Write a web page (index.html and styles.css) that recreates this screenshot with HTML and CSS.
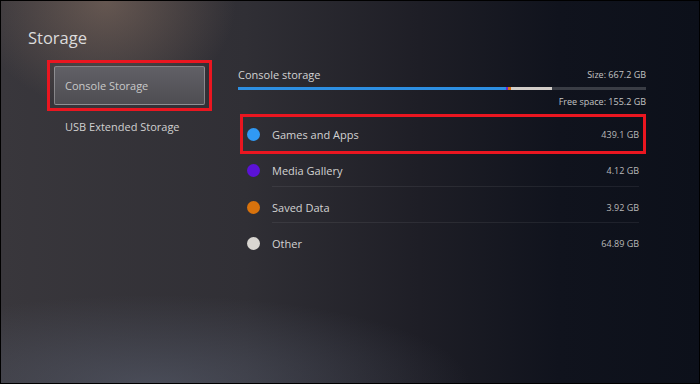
FILE: index.html
```html
<!DOCTYPE html>
<html lang="en">
<head>
    <meta charset="UTF-8">
    <title>Storage</title>
    <link rel="stylesheet" href="styles.css">
</head>
<body>
    <div class="screen">
        <h1 class="title">Storage</h1>

        <div class="content">
            <nav class="side-nav">
                <div class="nav-item active">
                    <div class="nav-btn">Console Storage</div>
                </div>
                <div class="nav-item">
                    <div class="nav-btn">USB Extended Storage</div>
                </div>
            </nav>

            <section class="panel">
                <div class="panel-head">
                    <span class="panel-title">Console storage</span>
                    <span class="panel-size">Size: 667.2 GB</span>
                </div>
                <div class="usage-bar">
                    <div class="seg seg-games" style="width: 65.6%"></div>
                    <div class="seg seg-media" style="width: 0.6%"></div>
                    <div class="seg seg-saved" style="width: 0.6%"></div>
                    <div class="seg seg-other" style="width: 10.1%"></div>
                </div>
                <div class="free-space">Free space: 155.2 GB</div>

                <ul class="usage-list">
                    <li class="usage-row active">
                        <span class="dot dot-games"></span>
                        <div class="row-main">
                            <span class="row-label">Games and Apps</span>
                            <span class="row-value">439.1 GB</span>
                        </div>
                    </li>
                    <li class="usage-row">
                        <span class="dot dot-media"></span>
                        <div class="row-main divided">
                            <span class="row-label">Media Gallery</span>
                            <span class="row-value">4.12 GB</span>
                        </div>
                    </li>
                    <li class="usage-row">
                        <span class="dot dot-saved"></span>
                        <div class="row-main divided">
                            <span class="row-label">Saved Data</span>
                            <span class="row-value">3.92 GB</span>
                        </div>
                    </li>
                    <li class="usage-row">
                        <span class="dot dot-other"></span>
                        <div class="row-main">
                            <span class="row-label">Other</span>
                            <span class="row-value">64.89 GB</span>
                        </div>
                    </li>
                </ul>
            </section>
        </div>
    </div>
</body>
</html>
```

FILE: styles.css
```css
body {
    margin: 0;
    font-family: 'Open Sans', 'Noto Sans', sans-serif;
    color: #d2d2d2;
}

.screen {
    width: 700px;
    height: 384px;
    box-sizing: border-box;
    border: 1px solid #000;
    overflow: hidden;
    background:
        radial-gradient(ellipse 130px 110px at 105px 0px, rgba(160, 130, 110, 0.45), transparent),
        radial-gradient(ellipse 320px 90px at 150px 384px, rgba(95, 102, 120, 0.5), transparent),
        linear-gradient(90deg, #39373c 0%, #302f35 35%, #1e1e26 60%, #10131d 80%, #0c101a 100%);
}

.title {
    margin: 0;
    padding: 25px 0 0 27px;
    font-size: 16.5px;
    font-weight: 400;
    line-height: 24px;
    color: #dcdcdc;
}

.content {
    display: flex;
    padding: 10px 0 0 46px;
}

/* Left menu */
.side-nav {
    width: 165px;
    display: flex;
    flex-direction: column;
}

.nav-item {
    border: 3px solid transparent;
    padding: 0 4px;
}

.nav-item.active {
    border-color: #ea1620;
    padding: 3px 4px;
}

.nav-btn {
    height: 22px;
    display: flex;
    align-items: center;
    padding-left: 10px;
    font-size: 11px;
    color: #d0d0d0;
    border: 1px solid transparent;
    border-radius: 2px;
}

.nav-item.active .nav-btn {
    height: 37px;
    background: linear-gradient(180deg, #616066, #4e4d52);
    border-color: rgba(255, 255, 255, 0.3);
    color: #c9c9c9;
}

/* Right panel */
.panel {
    width: 408px;
    margin-left: 26px;
}

.panel-head {
    display: flex;
    justify-content: space-between;
    align-items: center;
    height: 16px;
    margin-top: 6px;
}

.panel-title {
    font-size: 11px;
}

.panel-size,
.free-space {
    font-size: 9px;
    color: #c4c4c4;
}

.usage-bar {
    display: flex;
    height: 3px;
    margin-top: 5px;
    background: #3a3d45;
}

.seg-games { background: #2d8fe2; }
.seg-media { background: #6a2bd0; }
.seg-saved { background: #d8700f; }
.seg-other { background: #d2cdc8; }

.free-space {
    text-align: right;
    margin-top: 5px;
    line-height: 13px;
}

.usage-list {
    list-style: none;
    margin: 6px 0 0 2px;
    padding: 0;
}

.usage-row {
    display: flex;
    align-items: center;
    height: 36.4px;
    box-sizing: border-box;
    border: 3px solid transparent;
    padding: 0 4px;
    gap: 12px;
}

.usage-row.active {
    border-color: #ea1620;
    height: 40px;
    margin-bottom: -1.5px;
}

.dot {
    width: 13px;
    height: 13px;
    border-radius: 50%;
    flex-shrink: 0;
}

.dot-games { background: #3099f4; }
.dot-media { background: #5b12d6; }
.dot-saved { background: #d8720c; }
.dot-other { background: #d9d6d1; }

.row-main {
    flex: 1;
    display: flex;
    justify-content: space-between;
    align-items: center;
    height: 100%;
    font-size: 11px;
}

.row-main.divided {
    box-shadow: 0 1px 0 rgba(255, 255, 255, 0.07);
}

.row-value {
    font-size: 9px;
    color: #b9b9b9;
}
```
